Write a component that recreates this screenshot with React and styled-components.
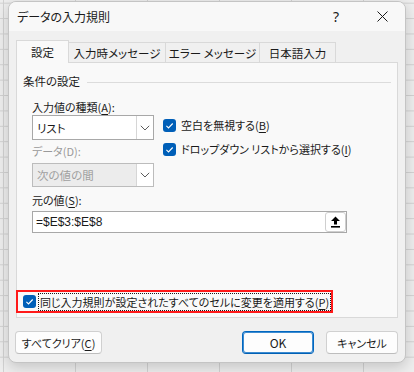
import React from "react";
import styled, { createGlobalStyle } from "styled-components";

const GlobalStyle = createGlobalStyle`
  html, body { margin: 0; padding: 0; }
  body {
    width: 414px;
    height: 372px;
    overflow: hidden;
    background-color: #eeeeee;
    background-image:
      linear-gradient(to right, #d2d2d2 1px, transparent 1px),
      linear-gradient(to bottom, #d2d2d2 1px, transparent 1px);
    background-size: 72px 100%, 100% 15.4px;
    background-position: 3px 0, 0 2.7px;
    font-family: "Noto Sans CJK JP", "Noto Sans", sans-serif;
    font-feature-settings: "palt" 1;
    font-size: 11px;
    color: #1a1a1a;
  }
`;

const Page = styled.div`
  padding: 1px 8px 0 8px;
`;

const Dialog = styled.div`
  width: 398px;
  height: 362px;
  box-sizing: border-box;
  border: 1px solid #c4c4c4;
  border-radius: 8px;
  background: #f0f0f0;
  display: flex;
  flex-direction: column;
  overflow: hidden;
  box-shadow: 0 4px 14px rgba(0, 0, 0, 0.18);
`;

const TitleBar = styled.div`
  height: 29px;
  display: flex;
  align-items: center;
  background: #f8f8f8;
  padding-left: 8px;
`;

const Title = styled.div`
  flex: 1;
  font-size: 12px;
  color: #1a1a1a;
`;

const TitleButton = styled.div`
  width: 46px;
  height: 29px;
  display: flex;
  align-items: center;
  justify-content: center;
  font-family: "Noto Sans", sans-serif;
  font-size: 14px;
  color: #1a1a1a;
`;

const Body = styled.div`
  flex: 1;
  display: flex;
  flex-direction: column;
  padding: 9px 7px 0 7px;
`;

const TabRow = styled.div`
  height: 22px;
  display: flex;
  align-items: flex-end;
`;

const Tab = styled.div`
  box-sizing: border-box;
  width: ${(p) => p.$w}px;
  height: ${(p) => (p.$active ? 23 : 20)}px;
  margin-bottom: ${(p) => (p.$active ? -1 : 0)}px;
  margin-left: ${(p) => (p.$first ? 0 : -1)}px;
  border: 1px solid #d9d9d9;
  border-bottom: none;
  background: ${(p) => (p.$active ? "#f9f9f9" : "#f0f0f0")};
  position: relative;
  z-index: ${(p) => (p.$active ? 2 : 1)};
  display: flex;
  align-items: center;
  justify-content: center;
  padding-top: ${(p) => (p.$active ? 0 : 1)}px;
  font-size: 11.5px;
  color: #1a1a1a;
`;

const Panel = styled.div`
  box-sizing: border-box;
  height: 256px;
  border: 1px solid #d9d9d9;
  background: #f9f9f9;
  display: flex;
  flex-direction: column;
`;

const GroupHeader = styled.div`
  margin: 10px 6px 0 6px;
  height: 16px;
  display: flex;
  align-items: center;
  gap: 7px;
  font-size: 11.5px;
  color: #1a1a1a;
  &::after {
    content: "";
    flex: 1;
    height: 1px;
    background: #dcdcdc;
    margin-top: 2px;
  }
`;

const Section = styled.div`
  padding-left: 15px;
  display: flex;
  flex-direction: column;
`;

const FieldLabel = styled.div`
  height: 16px;
  line-height: 16px;
  margin-top: ${(p) => p.$mt || 0}px;
  color: ${(p) => (p.$disabled ? "#9a9a9a" : "#1a1a1a")};
`;

const U = styled.span`
  text-decoration: underline;
  text-underline-offset: 2px;
`;

const Row = styled.div`
  display: flex;
  gap: 9px;
`;

const Column = styled.div`
  display: flex;
  flex-direction: column;
  padding-top: ${(p) => p.$pt || 0}px;
  gap: ${(p) => p.$gap || 0}px;
`;

const Select = styled.div`
  box-sizing: border-box;
  width: 122px;
  height: ${(p) => p.$h}px;
  margin-top: ${(p) => p.$mt || 0}px;
  border: 1px solid ${(p) => (p.$disabled ? "#bcbcbc" : "#a8a8a8")};
  background: ${(p) => (p.$disabled ? "#ececec" : "#ffffff")};
  display: flex;
  align-items: stretch;
  color: ${(p) => (p.$disabled ? "#a0a0a0" : "#1a1a1a")};
`;

const SelectText = styled.div`
  flex: 1;
  display: flex;
  align-items: center;
  padding-left: 4px;
  font-size: 11.5px;
`;

const ArrowCell = styled.div`
  width: 16px;
  background: #ffffff;
  border-left: 1px solid #d6d6d6;
  display: flex;
  align-items: center;
  justify-content: center;
`;

const CheckRow = styled.div`
  height: 14px;
  display: flex;
  align-items: center;
  gap: 5px;
  white-space: nowrap;
`;

const TextInput = styled.div`
  box-sizing: border-box;
  width: 315px;
  height: 22px;
  margin-top: 3px;
  border: 1px solid #a8a8a8;
  background: #ffffff;
  display: flex;
  align-items: stretch;
`;

const InputText = styled.div`
  flex: 1;
  display: flex;
  align-items: center;
  padding-left: 3px;
  font-family: "Liberation Sans", "Noto Sans CJK JP", sans-serif;
  font-size: 12px;
`;

const PickButton = styled.div`
  box-sizing: border-box;
  width: 21px;
  border: 1px solid #cfcfcf;
  border-radius: 3px;
  background: #ffffff;
  display: flex;
  align-items: center;
  justify-content: center;
`;

const ApplyBox = styled.div`
  align-self: flex-start;
  margin: auto 0 4px -1px;
  box-sizing: border-box;
  height: 23px;
  border: 2px solid #ff1a1a;
  display: flex;
  align-items: center;
  padding-left: 5px;
  gap: 2px;
`;

const FocusText = styled.div`
  box-sizing: border-box;
  height: 18px;
  border: 1px dotted #1a1a1a;
  display: flex;
  align-items: center;
  padding: 0 1px;
  white-space: nowrap;
`;

const Footer = styled.div`
  display: flex;
  align-items: center;
  margin-top: 13px;
`;

const Button = styled.div`
  box-sizing: border-box;
  width: ${(p) => p.$w}px;
  height: 23px;
  margin-left: ${(p) => p.$ml || 0}px;
  border: 1px solid ${(p) => (p.$primary ? "#0067c0" : "#d0d0d0")};
  border-bottom-color: ${(p) => (p.$primary ? "#0060b4" : "#bdbdbd")};
  box-shadow: ${(p) => (p.$primary ? "inset 0 0 0 1px #3d8bd0" : "none")};
  border-radius: 4px;
  background: #fdfdfd;
  display: flex;
  align-items: center;
  justify-content: center;
  font-size: ${(p) => (p.$latin ? 12 : 11)}px;
  color: #1a1a1a;
`;

const Spacer = styled.div`
  flex: 1;
`;

const CheckIcon = () => (
  <svg width="13" height="13" viewBox="0 0 13 13">
    <rect width="13" height="13" rx="3" fill="#005fb8" />
    <path d="M3.4 6.9 L5.5 8.9 L9.7 4.5" fill="none" stroke="#ffffff" strokeWidth="1.1" />
  </svg>
);

const Chevron = () => (
  <svg width="10" height="6" viewBox="0 0 10 6">
    <path d="M0.8 0.8 L5 5 L9.2 0.8" fill="none" stroke="#5c5c5c" strokeWidth="1" />
  </svg>
);

const PickIcon = () => (
  <svg width="11" height="12" viewBox="0 0 11 12">
    <path d="M5.5 0.5 L10 5 L7 5 L7 8.5 L4 8.5 L4 5 L1 5 Z" fill="#000" />
    <rect x="1" y="10" width="9" height="1.6" fill="#000" />
  </svg>
);

const CloseIcon = () => (
  <svg width="11" height="11" viewBox="0 0 11 11">
    <path d="M0.5 0.5 L10.5 10.5 M10.5 0.5 L0.5 10.5" stroke="#1a1a1a" strokeWidth="1" />
  </svg>
);

export default function App() {
  return (
    <>
      <GlobalStyle />
      <Page>
        <Dialog>
          <TitleBar>
            <Title>データの入力規則</Title>
            <TitleButton>?</TitleButton>
            <TitleButton>
              <CloseIcon />
            </TitleButton>
          </TitleBar>
          <Body>
            <TabRow>
              <Tab $first $active $w={53}>設定</Tab>
              <Tab $w={98}>入力時メッセージ</Tab>
              <Tab $w={95}>エラー メッセージ</Tab>
              <Tab $w={77}>日本語入力</Tab>
            </TabRow>
            <Panel>
              <GroupHeader>条件の設定</GroupHeader>
              <Section>
                <FieldLabel $mt={10}>
                  入力値の種類(<U>A</U>):
                </FieldLabel>
                <Row>
                  <Column>
                    <Select $h={25}>
                      <SelectText>リスト</SelectText>
                      <ArrowCell>
                        <Chevron />
                      </ArrowCell>
                    </Select>
                    <FieldLabel $mt={3} $disabled>
                      データ(D):
                    </FieldLabel>
                    <Select $h={24} $mt={4} $disabled>
                      <SelectText>次の値の間</SelectText>
                      <ArrowCell>
                        <Chevron />
                      </ArrowCell>
                    </Select>
                  </Column>
                  <Column $pt={3} $gap={10}>
                    <CheckRow>
                      <CheckIcon />
                      <span>
                        空白を無視する(<U>B</U>)
                      </span>
                    </CheckRow>
                    <CheckRow>
                      <CheckIcon />
                      <span>
                        ドロップダウン リストから選択する(<U>I</U>)
                      </span>
                    </CheckRow>
                  </Column>
                </Row>
                <FieldLabel $mt={5}>
                  元の値(<U>S</U>):
                </FieldLabel>
                <TextInput>
                  <InputText>=$E$3:$E$8</InputText>
                  <PickButton>
                    <PickIcon />
                  </PickButton>
                </TextInput>
              </Section>
              <ApplyBox>
                <CheckIcon />
                <FocusText>
                  同じ入力規則が設定されたすべてのセルに変更を適用する(<U>P</U>)
                </FocusText>
              </ApplyBox>
            </Panel>
            <Footer>
              <Button $w={87} $ml={-1}>
                すべてクリア(<U>C</U>)
              </Button>
              <Spacer />
              <Button $w={72} $primary $latin>
                OK
              </Button>
              <Button $w={72} $ml={12}>
                キャンセル
              </Button>
            </Footer>
          </Body>
        </Dialog>
      </Page>
    </>
  );
}
